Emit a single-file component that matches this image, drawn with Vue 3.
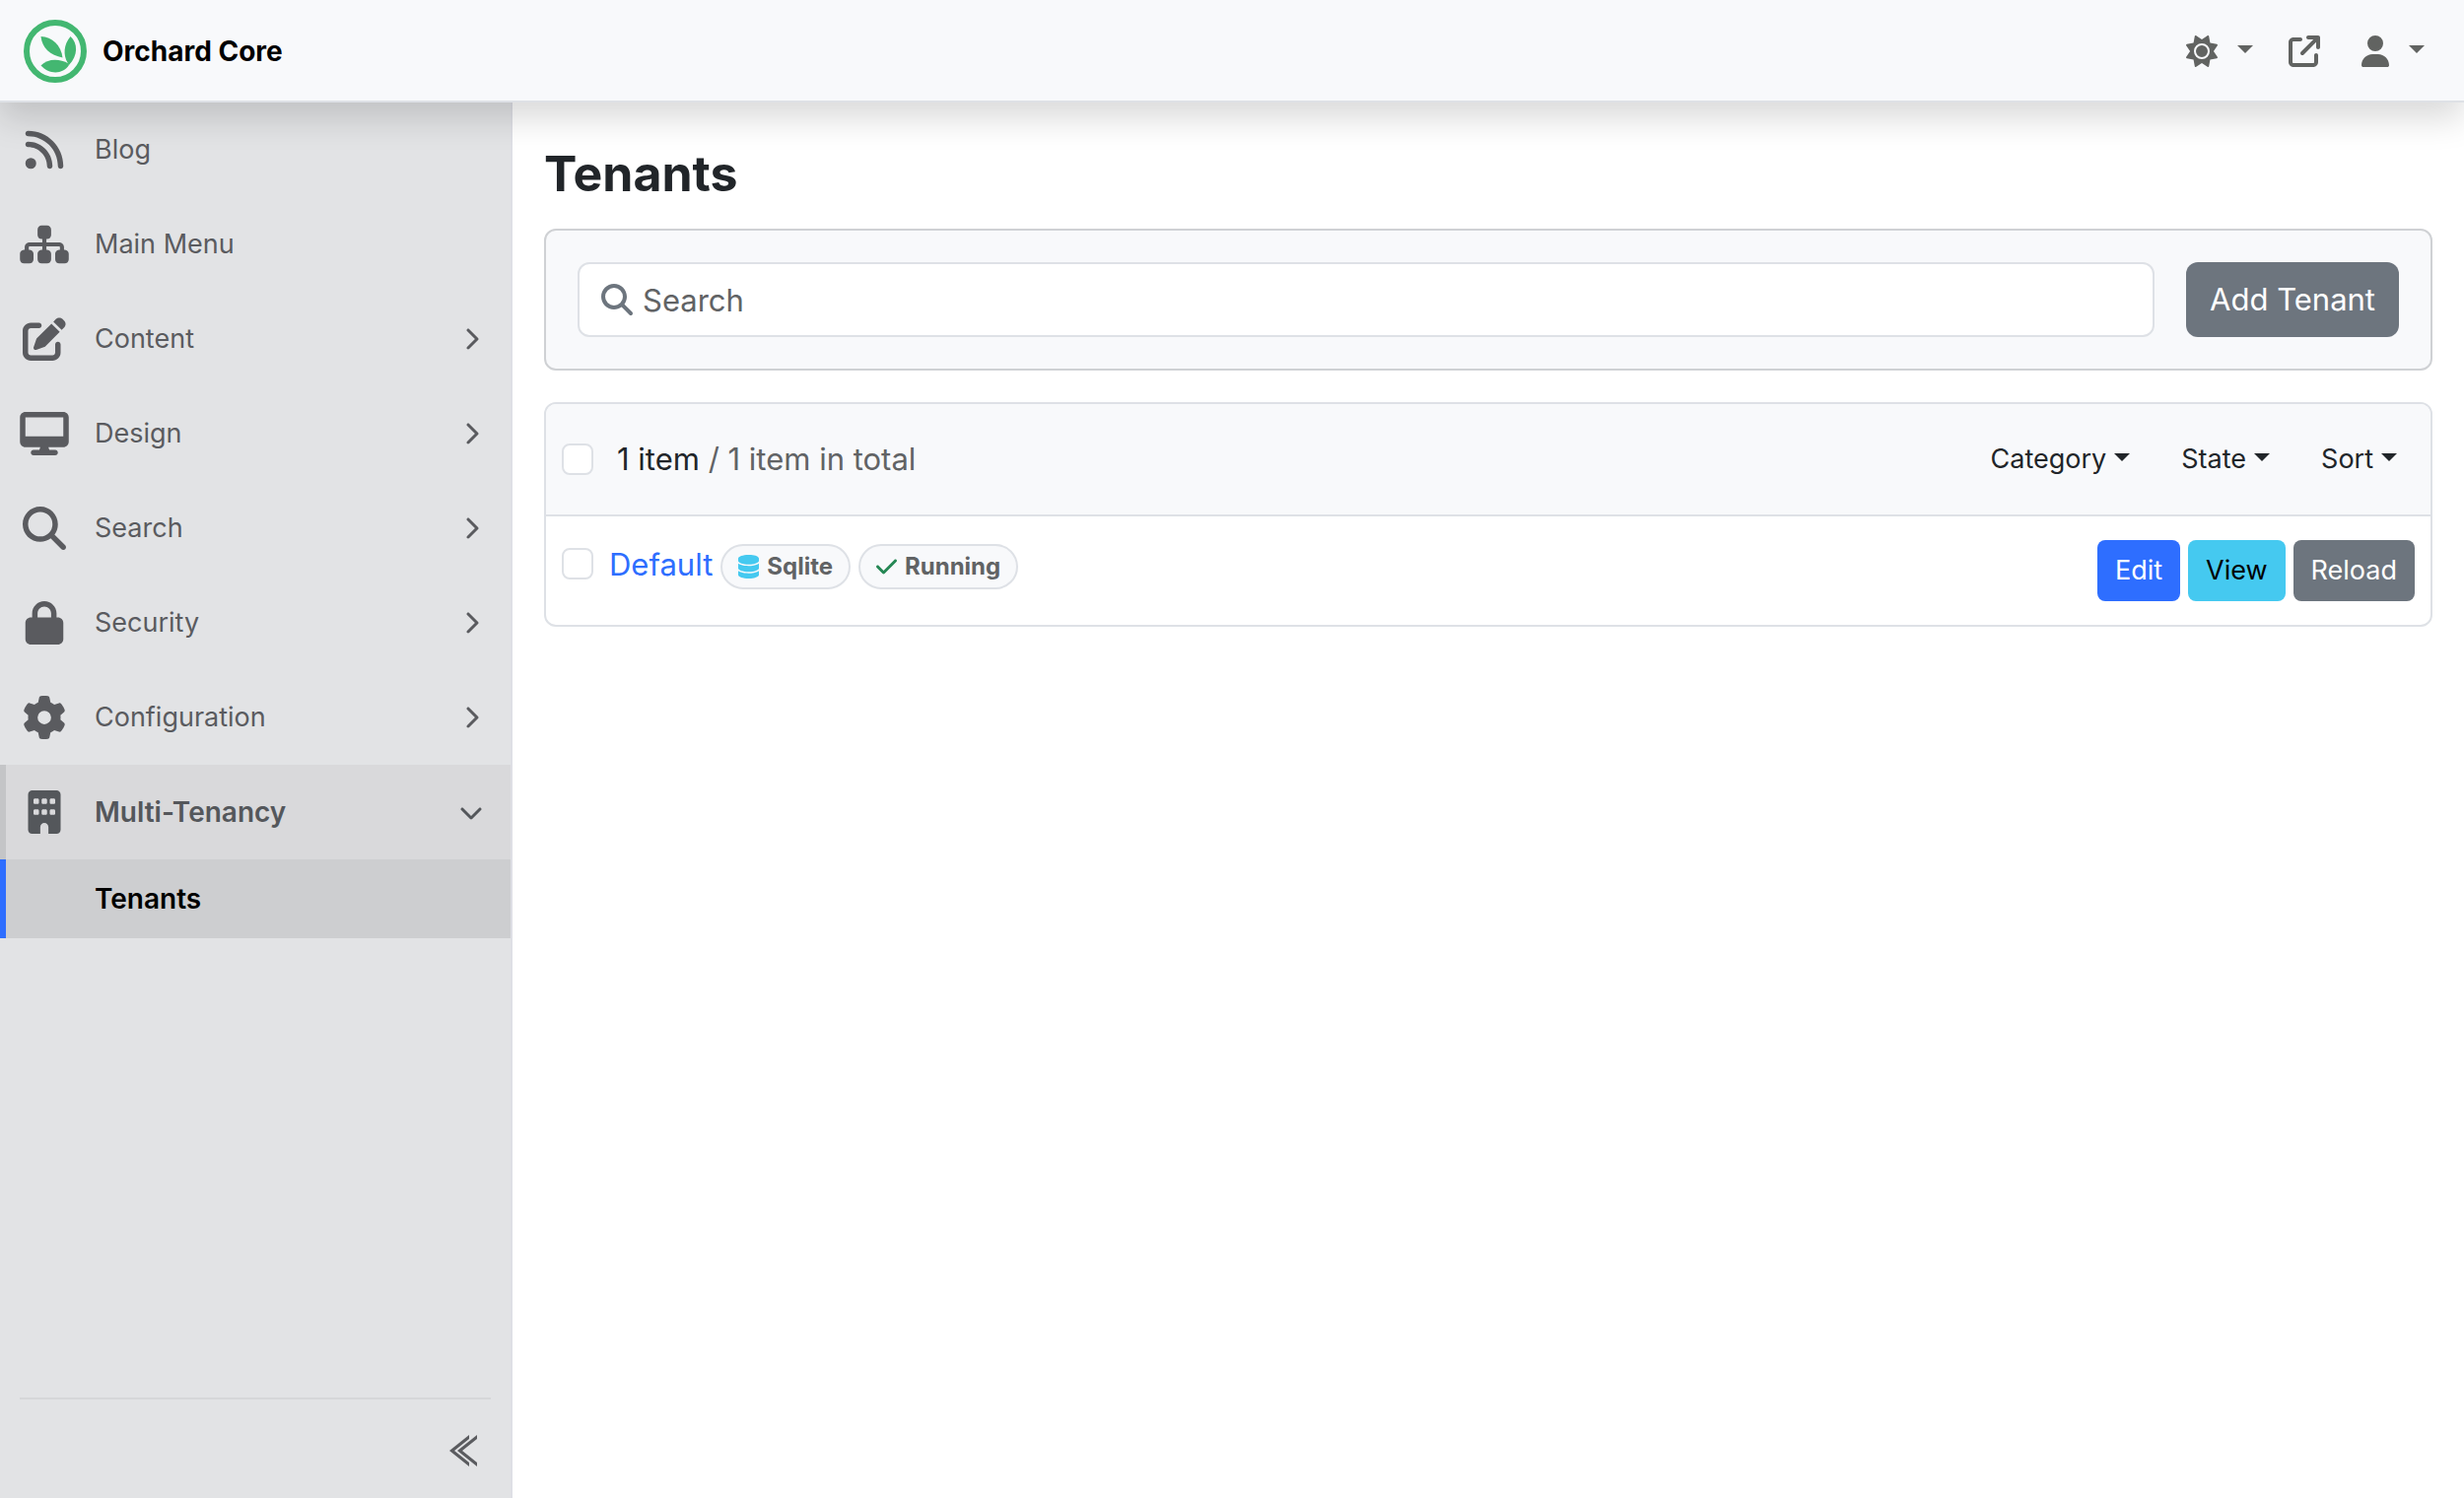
<template>
  <div class="admin">

    <!-- Top bar -->
    <header class="topbar">
      <a class="brand" href="#">
        <svg class="brand-logo" viewBox="0 0 64 64">
          <circle cx="32" cy="32" r="29" fill="none" stroke="#43b771" stroke-width="6" />
          <path fill="#43b771" d="M17.5 17C29 17.5 38 26 39.5 38.5C27 36 18.5 28.5 17.5 17z" />
          <path fill="#43b771" d="M47.5 17C55 24 55.5 36 46 46C45.5 45.5 45 44.5 44.500 43.500C40 36 40.500 25 47.500 17z" />
          <path fill="#43b771" d="M17.5 46.500C24 39.500 36 39 45.500 44.500L46 46C40 55.500 26 56 17.500 46.500z" />
        </svg>
        <span>Orchard Core</span>
      </a>
      <nav class="topbar-nav">
        <button class="top-btn" type="button" aria-label="Theme">
          <svg class="icon-32" viewBox="0 0 512 512"><path :d="icons.sun" /></svg>
          <span class="caret"></span>
        </button>
        <a class="top-btn" href="#" aria-label="Visit site">
          <svg class="icon-32" viewBox="0 0 512 512"><path :d="icons.external" /></svg>
        </a>
        <button class="top-btn" type="button" aria-label="Account">
          <svg class="icon-user" viewBox="0 0 448 512"><path :d="icons.user" /></svg>
          <span class="caret"></span>
        </button>
      </nav>
    </header>

    <div class="layout">

      <!-- Sidebar -->
      <aside class="sidebar">
        <ul class="menu">
          <li v-for="item in menu" :key="item.label">
            <a class="menu-link" :class="{ open: item.children }" href="#">
              <svg class="menu-icon" :viewBox="`0 0 ${item.size} 512`"><path :d="icons[item.icon]" /></svg>
              <span class="menu-label">{{ item.label }}</span>
              <svg v-if="item.children" class="menu-arrow" viewBox="0 0 512 512"><path :d="icons.down" /></svg>
              <svg v-else-if="item.expandable" class="menu-arrow" viewBox="0 0 320 512"><path :d="icons.right" /></svg>
            </a>
            <ul v-if="item.children" class="submenu">
              <li v-for="child in item.children" :key="child">
                <a class="submenu-link" href="#">{{ child }}</a>
              </li>
            </ul>
          </li>
        </ul>
        <div class="sidebar-footer">
          <button class="compact-btn" type="button" aria-label="Collapse menu">
            <svg width="28" height="32" viewBox="0 0 28 32" fill="currentColor">
              <path d="M0 16L20 0V4L5 16L20 28V32z" />
              <path d="M8 16L28 0V4L13 16L28 28V32z" />
            </svg>
          </button>
        </div>
      </aside>

      <!-- Content -->
      <main class="content">
        <h1>Tenants</h1>

        <form class="search-card" @submit.prevent>
          <div class="search-box">
            <svg class="search-icon" viewBox="0 0 512 512"><path :d="icons.search" /></svg>
            <input v-model="query" type="text" placeholder="Search" aria-label="Search" />
          </div>
          <button class="btn btn-secondary btn-add" type="button">Add Tenant</button>
        </form>

        <ul class="list">
          <li class="list-head">
            <input id="select-all" v-model="allSelected" class="check" type="checkbox" />
            <label class="list-count" for="select-all">1 item <span>/ 1 item in total</span></label>
            <div class="filters">
              <button v-for="f in filters" :key="f" class="filter-btn" type="button">
                {{ f }}<span class="caret"></span>
              </button>
            </div>
          </li>
          <li class="list-row">
            <input id="tenant-default" v-model="allSelected" class="check" type="checkbox" aria-label="Default" />
            <div class="tenant">
              <a href="#">Default</a>
              <span class="badge">
                <svg class="info" viewBox="0 0 448 512"><path :d="icons.database" /></svg>
                Sqlite
              </span>
              <span class="badge">
                <svg class="success" viewBox="0 0 448 512"><path :d="icons.check" /></svg>
                Running
              </span>
            </div>
            <div class="actions">
              <button class="btn btn-sm btn-primary" type="button">Edit</button>
              <button class="btn btn-sm btn-info" type="button">View</button>
              <button class="btn btn-sm btn-secondary" type="button">Reload</button>
            </div>
          </li>
        </ul>
      </main>
    </div>
  </div>
</template>

<script setup>
import { ref } from 'vue'

const query = ref('')
const allSelected = ref(false)

const filters = ['Category', 'State', 'Sort']

const menu = [
  { label: 'Blog', icon: 'rss', size: 448 },
  { label: 'Main Menu', icon: 'sitemap', size: 576 },
  { label: 'Content', icon: 'edit', size: 512, expandable: true },
  { label: 'Design', icon: 'desktop', size: 576, expandable: true },
  { label: 'Search', icon: 'search', size: 512, expandable: true },
  { label: 'Security', icon: 'lock', size: 448, expandable: true },
  { label: 'Configuration', icon: 'gear', size: 512, expandable: true },
  { label: 'Multi-Tenancy', icon: 'building', size: 384, children: ['Tenants'] },
]

const icons = {
  rss: 'M0 64C0 46.3 14.3 32 32 32c229.8 0 416 186.2 416 416c0 17.7-14.3 32-32 32s-32-14.3-32-32C384 253.6 226.4 96 32 96C14.3 96 0 81.7 0 64zM0 416a64 64 0 1 1 128 0A64 64 0 1 1 0 416zM32 160c159.1 0 288 128.9 288 288c0 17.7-14.3 32-32 32s-32-14.3-32-32c0-123.7-100.3-224-224-224c-17.7 0-32-14.3-32-32s14.3-32 32-32z',
  sitemap: 'M208 80c0-26.5 21.5-48 48-48l64 0c26.5 0 48 21.5 48 48l0 64c0 26.5-21.5 48-48 48l-8 0 0 40 152 0c30.9 0 56 25.1 56 56l0 32 8 0c26.5 0 48 21.5 48 48l0 64c0 26.5-21.5 48-48 48l-64 0c-26.5 0-48-21.5-48-48l0-64c0-26.5 21.5-48 48-48l8 0 0-32c0-4.4-3.6-8-8-8l-152 0 0 40 8 0c26.5 0 48 21.5 48 48l0 64c0 26.5-21.5 48-48 48l-64 0c-26.5 0-48-21.5-48-48l0-64c0-26.5 21.5-48 48-48l8 0 0-40-152 0c-4.4 0-8 3.6-8 8l0 32 8 0c26.5 0 48 21.5 48 48l0 64c0 26.5-21.5 48-48 48l-64 0c-26.5 0-48-21.5-48-48l0-64c0-26.5 21.5-48 48-48l8 0 0-32c0-30.9 25.1-56 56-56l152 0 0-40-8 0c-26.5 0-48-21.5-48-48l0-64z',
  edit: 'M471.6 21.7c-21.9-21.9-57.3-21.9-79.2 0L362.3 51.7l97.9 97.9 30.1-30.1c21.9-21.9 21.9-57.3 0-79.2L471.6 21.7zm-299.2 220c-6.1 6.1-10.8 13.6-13.5 21.9l-29.6 88.8c-2.9 8.6-.6 18.1 5.8 24.6s15.9 8.7 24.6 5.8l88.8-29.6c8.2-2.7 15.7-7.4 21.9-13.5L437.7 172.3 339.7 74.3 172.4 241.7zM96 64C43 64 0 107 0 160L0 416c0 53 43 96 96 96l256 0c53 0 96-43 96-96l0-96c0-17.7-14.3-32-32-32s-32 14.3-32 32l0 96c0 17.7-14.3 32-32 32L96 448c-17.7 0-32-14.3-32-32l0-256c0-17.7 14.3-32 32-32l96 0c17.7 0 32-14.3 32-32s-14.3-32-32-32L96 64z',
  desktop: 'M64 0C28.7 0 0 28.7 0 64L0 352c0 35.3 28.7 64 64 64l176 0-10.7 32L160 448c-17.7 0-32 14.3-32 32s14.3 32 32 32l256 0c17.7 0 32-14.3 32-32s-14.3-32-32-32l-69.3 0L336 416l176 0c35.3 0 64-28.7 64-64l0-288c0-35.3-28.7-64-64-64L64 0zM512 64l0 224L64 288 64 64l448 0z',
  search: 'M416 208c0 45.9-14.9 88.3-40 122.7L502.6 457.4c12.5 12.5 12.5 32.8 0 45.3s-32.8 12.5-45.3 0L330.7 376c-34.4 25.2-76.8 40-122.7 40C93.1 416 0 322.9 0 208S93.1 0 208 0S416 93.1 416 208zM208 352a144 144 0 1 0 0-288 144 144 0 1 0 0 288z',
  lock: 'M144 144l0 48 160 0 0-48c0-44.2-35.8-80-80-80s-80 35.8-80 80zM80 192l0-48C80 64.5 144.5 0 224 0s144 64.5 144 144l0 48 16 0c35.3 0 64 28.7 64 64l0 192c0 35.3-28.7 64-64 64L64 512c-35.3 0-64-28.7-64-64L0 256c0-35.3 28.7-64 64-64l16 0z',
  gear: 'M495.9 166.6c3.2 8.7 .5 18.4-6.4 24.6l-43.3 39.4c1.1 8.3 1.7 16.8 1.7 25.4s-.6 17.1-1.7 25.4l43.3 39.4c6.9 6.2 9.6 15.9 6.4 24.6c-4.4 11.9-9.7 23.3-15.8 34.3l-4.7 8.1c-6.6 11-14 21.4-22.1 31.2c-5.9 7.2-15.7 9.6-24.5 6.8l-55.7-17.7c-13.4 10.3-28.2 18.9-44 25.4l-12.5 57.1c-2 9.1-9 16.3-18.2 17.8c-13.8 2.3-28 3.5-42.5 3.5s-28.7-1.2-42.5-3.5c-9.2-1.5-16.2-8.7-18.2-17.8l-12.5-57.1c-15.8-6.5-30.6-15.1-44-25.4L83.1 425.9c-8.8 2.8-18.6 .3-24.5-6.8c-8.1-9.8-15.5-20.2-22.1-31.2l-4.7-8.1c-6.1-11-11.4-22.4-15.8-34.3c-3.2-8.7-.5-18.4 6.4-24.6l43.3-39.4C64.6 273.1 64 264.6 64 256s.6-17.1 1.7-25.4L22.4 191.2c-6.9-6.2-9.6-15.9-6.4-24.6c4.4-11.9 9.7-23.3 15.8-34.3l4.7-8.1c6.6-11 14-21.4 22.1-31.2c5.9-7.2 15.7-9.6 24.5-6.8l55.7 17.7c13.4-10.3 28.2-18.9 44-25.4l12.5-57.1c2-9.1 9-16.3 18.2-17.8C227.3 1.2 241.5 0 256 0s28.7 1.2 42.5 3.5c9.2 1.5 16.2 8.7 18.2 17.8l12.5 57.1c15.8 6.5 30.6 15.1 44 25.4l55.7-17.7c8.8-2.8 18.6-.3 24.5 6.8c8.1 9.8 15.5 20.2 22.1 31.2l4.7 8.1c6.1 11 11.4 22.4 15.8 34.3zM256 336a80 80 0 1 0 0-160 80 80 0 1 0 0 160z',
  building: 'M48 0C21.5 0 0 21.5 0 48L0 464c0 26.5 21.5 48 48 48l96 0 0-80c0-26.5 21.5-48 48-48s48 21.5 48 48l0 80 96 0c26.5 0 48-21.5 48-48l0-416c0-26.5-21.5-48-48-48L48 0zM64 240c0-8.8 7.2-16 16-16l32 0c8.8 0 16 7.2 16 16l0 32c0 8.8-7.2 16-16 16l-32 0c-8.8 0-16-7.2-16-16l0-32zm112-16l32 0c8.8 0 16 7.2 16 16l0 32c0 8.8-7.2 16-16 16l-32 0c-8.8 0-16-7.2-16-16l0-32c0-8.8 7.2-16 16-16zm80 16c0-8.8 7.2-16 16-16l32 0c8.8 0 16 7.2 16 16l0 32c0 8.8-7.2 16-16 16l-32 0c-8.8 0-16-7.2-16-16l0-32zM80 96l32 0c8.8 0 16 7.2 16 16l0 32c0 8.8-7.2 16-16 16l-32 0c-8.8 0-16-7.2-16-16l0-32c0-8.8 7.2-16 16-16zm80 16c0-8.8 7.2-16 16-16l32 0c8.8 0 16 7.2 16 16l0 32c0 8.8-7.2 16-16 16l-32 0c-8.8 0-16-7.2-16-16l0-32zM272 96l32 0c8.8 0 16 7.2 16 16l0 32c0 8.8-7.2 16-16 16l-32 0c-8.8 0-16-7.2-16-16l0-32c0-8.8 7.2-16 16-16z',
  sun: 'M361.5 1.2c5 2.1 8.6 6.6 9.6 11.9L391 121l107.9 19.8c5.3 1 9.8 4.6 11.9 9.6s1.5 10.7-1.6 15.2L446.9 256l62.3 90.3c3.1 4.5 3.7 10.2 1.6 15.2s-6.6 8.6-11.9 9.6L391 391 371.1 498.9c-1 5.3-4.6 9.8-9.6 11.9s-10.7 1.5-15.2-1.6L256 446.9l-90.3 62.3c-4.5 3.1-10.2 3.7-15.2 1.6s-8.6-6.6-9.6-11.9L121 391 13.1 371.1c-5.3-1-9.8-4.6-11.9-9.6s-1.5-10.7 1.6-15.2L65.1 256 2.8 165.7c-3.1-4.5-3.7-10.2-1.6-15.2s6.6-8.6 11.9-9.6L121 121 140.9 13.1c1-5.3 4.6-9.8 9.6-11.9s10.7-1.5 15.2 1.6L256 65.1 346.3 2.8c4.5-3.1 10.2-3.7 15.2-1.6zM160 256a96 96 0 1 1 192 0 96 96 0 1 1 -192 0zm224 0a128 128 0 1 0 -256 0 128 128 0 1 0 256 0z',
  external: 'M320 0c-17.7 0-32 14.3-32 32s14.3 32 32 32l82.7 0L201.4 265.4c-12.5 12.5-12.5 32.8 0 45.3s32.8 12.5 45.3 0L448 109.3l0 82.7c0 17.7 14.3 32 32 32s32-14.3 32-32l0-160c0-17.7-14.3-32-32-32L320 0zM80 32C35.8 32 0 67.8 0 112L0 432c0 44.2 35.8 80 80 80l320 0c44.2 0 80-35.8 80-80l0-112c0-17.7-14.3-32-32-32s-32 14.3-32 32l0 112c0 8.8-7.2 16-16 16L80 448c-8.8 0-16-7.2-16-16l0-320c0-8.8 7.2-16 16-16l112 0c17.7 0 32-14.3 32-32s-14.3-32-32-32L80 32z',
  user: 'M224 256A128 128 0 1 0 224 0a128 128 0 1 0 0 256zm-45.7 48C79.8 304 0 383.8 0 482.3C0 498.7 13.3 512 29.7 512l388.6 0c16.4 0 29.7-13.3 29.7-29.7C448 383.8 368.2 304 269.7 304l-91.4 0z',
  database: 'M448 80l0 48c0 44.2-100.3 80-224 80S0 172.2 0 128L0 80C0 35.8 100.3 0 224 0S448 35.8 448 80zM393.2 214.7c20.8-7.4 39.9-16.9 54.8-28.6L448 288c0 44.2-100.3 80-224 80S0 332.2 0 288L0 186.1c14.9 11.8 34 21.2 54.8 28.6C99.7 230.7 159.5 240 224 240s124.3-9.3 169.2-25.3zM0 346.1c14.9 11.8 34 21.2 54.8 28.6C99.7 390.7 159.5 400 224 400s124.3-9.3 169.2-25.3c20.8-7.4 39.9-16.9 54.8-28.6l0 85.9c0 44.2-100.3 80-224 80S0 476.2 0 432l0-85.9z',
  check: 'M438.6 105.4c12.5 12.5 12.5 32.8 0 45.3l-256 256c-12.5 12.5-32.8 12.5-45.3 0l-128-128c-12.5-12.5-12.5-32.8 0-45.3s32.8-12.5 45.3 0L160 338.7 393.4 105.4c12.5-12.5 32.8-12.5 45.3 0z',
  right: 'M310.6 233.4c12.5 12.5 12.5 32.8 0 45.3l-192 192c-12.5 12.5-32.8 12.5-45.3 0s-12.5-32.8 0-45.3L242.7 256 73.4 86.6c-12.5-12.5-12.5-32.8 0-45.3s32.8-12.5 45.3 0l192 192z',
  down: 'M233.4 406.6c12.5 12.5 32.8 12.5 45.3 0l192-192c12.5-12.5 12.5-32.8 0-45.3s-32.8-12.5-45.3 0L256 338.7 86.6 169.4c-12.5-12.5-32.8-12.5-45.3 0s-12.5 32.8 0 45.3l192 192z',
}
</script>

<style>
body {
  margin: 0;
  background: #fff;
}
</style>

<style scoped>
.admin {
  min-height: 100vh;
  display: flex;
  flex-direction: column;
  font-family: Inter, "Liberation Sans", sans-serif;
  font-size: 31px;
  line-height: 48px;
  color: #212529;
}

.admin * {
  box-sizing: border-box;
}

a {
  text-decoration: none;
}

button,
input {
  font-family: inherit;
}

ul {
  list-style: none;
  margin: 0;
  padding: 0;
}

.caret {
  display: inline-block;
  border-top: 8px solid currentColor;
  border-left: 8px solid transparent;
  border-right: 8px solid transparent;
}

/* ── Top bar ── */
.topbar {
  display: flex;
  align-items: center;
  justify-content: space-between;
  height: 104px;
  padding: 2px 40px 0 24px;
  background: #f8f9fb;
  border-bottom: 2px solid #dee1e6;
  box-shadow: 0 16px 32px rgba(0, 0, 0, 0.15);
  position: relative;
  z-index: 1;
}

.brand {
  display: flex;
  align-items: center;
  gap: 16px;
  color: #000;
  font-size: 28px;
  font-weight: 700;
}

.brand-logo {
  width: 64px;
  height: 64px;
}

.topbar-nav {
  display: flex;
  align-items: center;
  gap: 36px;
}

.top-btn {
  display: flex;
  align-items: center;
  gap: 20px;
  padding: 0;
  border: none;
  background: none;
  color: #616361;
  cursor: pointer;
}

.top-btn svg,
.menu-link svg,
.search-icon,
.badge svg {
  fill: currentColor;
}

.top-btn .caret {
  margin-bottom: 4px;
}

.icon-32 {
  width: 32px;
  height: 32px;
}

.icon-user {
  width: 28px;
  height: 32px;
  margin-left: 6px;
}

/* ── Sidebar ── */
.layout {
  flex: 1;
  display: flex;
}

.sidebar {
  width: 520px;
  flex-shrink: 0;
  display: flex;
  flex-direction: column;
  justify-content: space-between;
  background: #e2e3e5;
  border-right: 2px solid #dedfe5;
}

.menu-link {
  display: flex;
  align-items: center;
  height: 96px;
  padding: 0 28px 0 14px;
  border-left: 6px solid transparent;
  color: #5a5b5f;
  font-size: 27px;
}

.menu-link.open {
  background: #d9d9db;
  border-left-color: #c4c5c7;
  color: #54575b;
  font-size: 28px;
  font-weight: 600;
}

.menu-icon {
  width: 50px;
  height: 44px;
}

.menu-label {
  flex: 1;
  margin-left: 26px;
}

.menu-arrow {
  width: 24px;
  height: 24px;
}

.submenu-link {
  display: block;
  padding: 16px 28px 16px 90px;
  border-left: 6px solid #2e6eff;
  background: #cdced0;
  color: #000;
  font-size: 28px;
  font-weight: 600;
}

.sidebar-footer {
  display: flex;
  justify-content: flex-end;
  margin: 0 20px;
  padding: 36px 14px 32px;
  border-top: 2px solid #d6d7d9;
}

.compact-btn {
  display: flex;
  padding: 0;
  border: none;
  background: none;
  color: #5a5b5f;
  cursor: pointer;
}

/* ── Content ── */
.content {
  flex: 1;
  min-width: 0;
  padding: 40px 32px;
}

h1 {
  margin: 0 0 24px;
  font-size: 50px;
  line-height: 64px;
  font-weight: 700;
}

.search-card {
  display: flex;
  gap: 32px;
  padding: 32px;
  border: 2px solid #cfd1d4;
  border-radius: 12px;
  background: #f8f9fb;
}

.search-box {
  flex: 1;
  display: flex;
  align-items: center;
  gap: 10px;
  padding: 0 22px;
  border: 2px solid #dee1e6;
  border-radius: 12px;
  background: #fff;
}

.search-icon {
  width: 32px;
  height: 32px;
  color: #6d757e;
}

.search-box input {
  flex: 1;
  min-width: 0;
  padding: 0;
  border: none;
  outline: none;
  background: transparent;
  font-size: 31px;
  color: #212529;
}

.search-box input::placeholder {
  color: #616365;
  opacity: 1;
}

/* ── Buttons ── */
.btn {
  border: none;
  cursor: pointer;
}

.btn-add {
  padding: 14px 24px;
  border-radius: 12px;
  font-size: 31px;
  line-height: 48px;
}

.btn-sm {
  padding: 10px 18px;
  border-radius: 8px;
  font-size: 27px;
  line-height: 42px;
}

.btn-primary {
  background: #2e6eff;
  color: #fff;
}

.btn-info {
  background: #45c9f0;
  color: #000;
}

.btn-secondary {
  background: #6d757e;
  color: #fff;
}

/* ── Tenant list ── */
.list {
  margin-top: 32px;
  border: 2px solid #dee1e6;
  border-radius: 12px;
  overflow: hidden;
}

.list-head {
  display: flex;
  align-items: center;
  min-height: 114px;
  padding: 0 8px 0 16px;
  background: #f8f9fb;
  border-bottom: 2px solid #dee1e6;
}

.list-count {
  flex: 1;
  margin-left: 24px;
}

.list-count span {
  color: #616365;
}

.check {
  appearance: none;
  flex-shrink: 0;
  width: 32px;
  height: 32px;
  margin: 0;
  border: 2px solid #dee1e6;
  border-radius: 8px;
  background: #fff;
}

.filters {
  display: flex;
}

.filter-btn {
  display: flex;
  align-items: center;
  gap: 8px;
  padding: 8px 26px;
  border: none;
  background: none;
  color: #212529;
  font-size: 27px;
  line-height: 42px;
  cursor: pointer;
}

.filter-btn .caret {
  margin-bottom: 4px;
}

.list-row {
  display: flex;
  align-items: flex-start;
  padding: 24px 16px;
}

.list-row .check {
  margin-top: 8px;
}

.tenant {
  flex: 1;
  display: flex;
  align-items: center;
  gap: 8px;
  margin-left: 16px;
}

.tenant a {
  color: #2e6eff;
}

.badge {
  display: flex;
  align-items: center;
  gap: 8px;
  height: 46px;
  margin-top: 4px;
  padding: 0 16px;
  border: 2px solid #dee1e6;
  border-radius: 24px;
  background: #f8f9fb;
  color: #616365;
  font-size: 24px;
  font-weight: 700;
}

.badge svg {
  width: 21px;
  height: 24px;
}

.badge .info {
  color: #45c9f0;
}

.badge .success {
  color: #258754;
}

.actions {
  display: flex;
  gap: 8px;
}
</style>
